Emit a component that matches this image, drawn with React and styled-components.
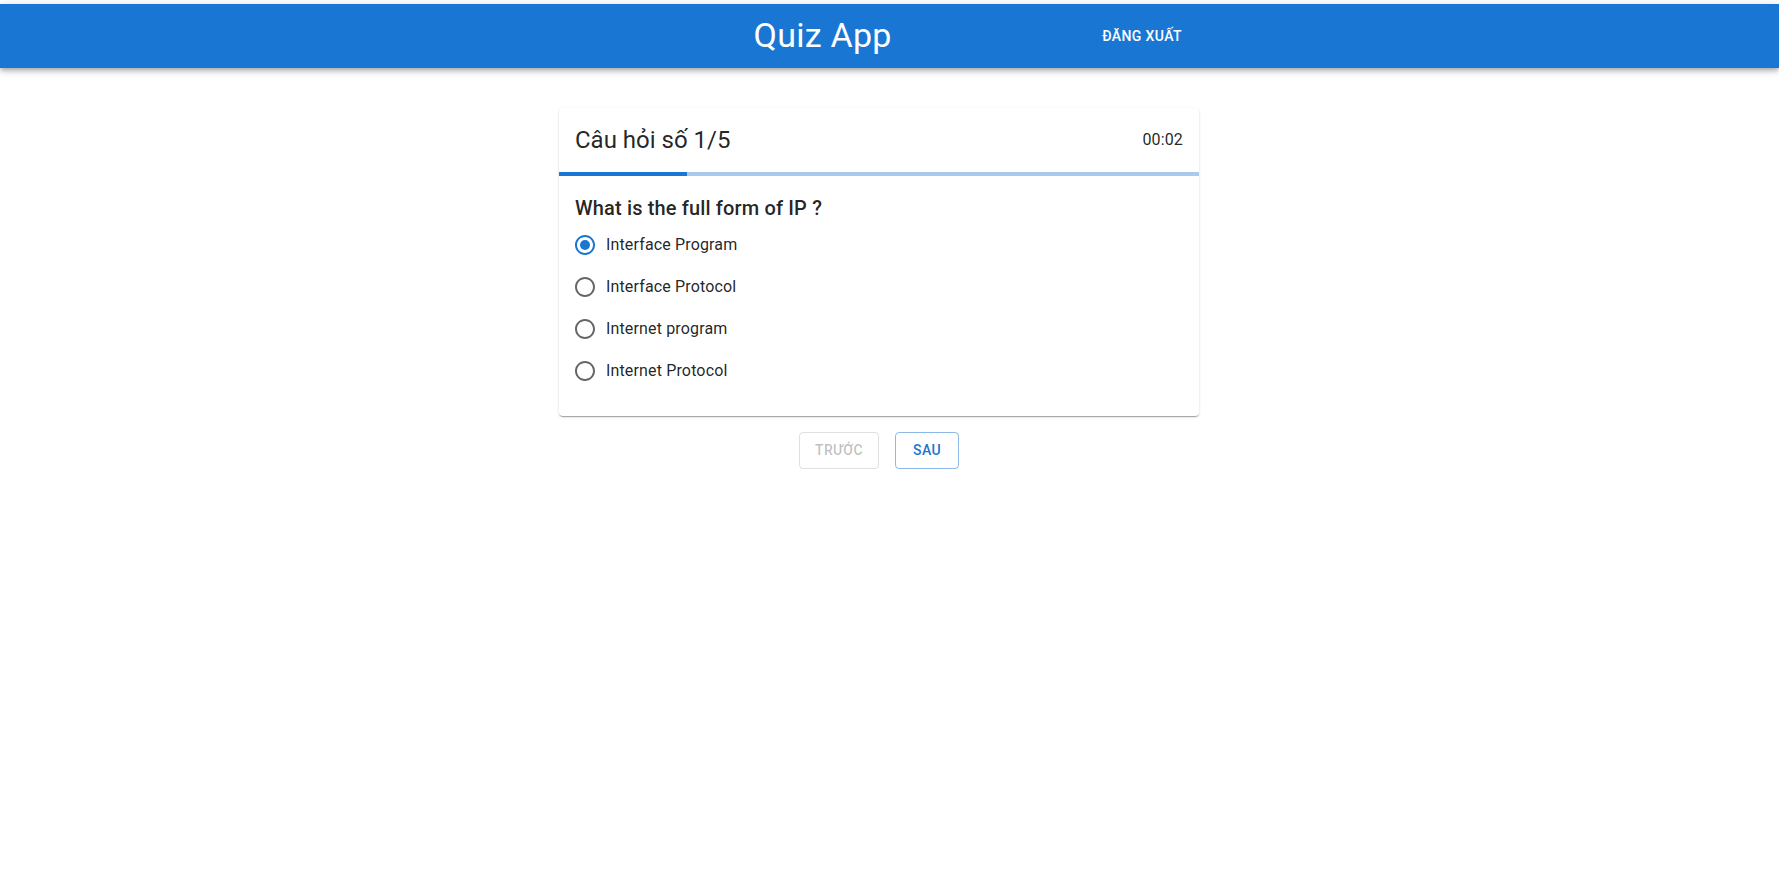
import React, { useState } from 'react'
import styled, { createGlobalStyle } from 'styled-components'

const GlobalStyle = createGlobalStyle`
  * { box-sizing: border-box; }
  body {
    margin: 0;
    background: #fff;
    font-family: Roboto, "Liberation Sans", Arial, sans-serif;
    color: rgba(0, 0, 0, 0.87);
  }
`

const answers = [
  'Interface Program',
  'Interface Protocol',
  'Internet program',
  'Internet Protocol',
]

const total = 5
const current = 1

export default function App() {
  const [picked, setPicked] = useState(0)

  return (
    <Page>
      <GlobalStyle />
      <AppBar>
        <Column>
          <Brand>Quiz App</Brand>
          <LogoutButton type="button">Đăng xuất</LogoutButton>
        </Column>
      </AppBar>
      <Main>
        <Column $stack>
          <Card>
            <CardHeader>
              <QuestionNo>
                Câu hỏi số {current}/{total}
              </QuestionNo>
              <Timer>00:02</Timer>
            </CardHeader>
            <Progress>
              <ProgressFill style={{ width: `${(current / total) * 100}%` }} />
            </Progress>
            <CardBody>
              <Question>What is the full form of IP ?</Question>
              <RadioGroup>
                {answers.map((a, i) => (
                  <Option key={a} onClick={() => setPicked(i)}>
                    <RadioBox>
                      <RadioIcon checked={picked === i} />
                    </RadioBox>
                    <OptionText>{a}</OptionText>
                  </Option>
                ))}
              </RadioGroup>
            </CardBody>
          </Card>
          <Nav>
            <NavButton type="button" disabled>
              Trước
            </NavButton>
            <NavButton type="button">Sau</NavButton>
          </Nav>
        </Column>
      </Main>
    </Page>
  )
}

const RadioIcon = ({ checked }) => (
  <Svg viewBox="0 0 24 24" $checked={checked}>
    <path d="M12 2C6.48 2 2 6.48 2 12s4.48 10 10 10 10-4.48 10-10S17.52 2 12 2zm0 18c-4.42 0-8-3.58-8-8s3.58-8 8-8 8 3.58 8 8-3.58 8-8 8z" />
    {checked && <circle cx="12" cy="12" r="5" />}
  </Svg>
)

const Page = styled.div`
  padding-top: 4px;
  min-height: 100vh;
`

const AppBar = styled.header`
  display: flex;
  justify-content: center;
  padding-right: 21px;
  height: 64px;
  background: #1976d2;
  color: #fff;
  box-shadow: 0px 2px 4px -1px rgba(0, 0, 0, 0.2),
    0px 4px 5px 0px rgba(0, 0, 0, 0.14), 0px 1px 10px 0px rgba(0, 0, 0, 0.12);
`

const Column = styled.div`
  width: 640px;
  display: flex;
  flex-direction: ${(p) => (p.$stack ? 'column' : 'row')};
  align-items: ${(p) => (p.$stack ? 'stretch' : 'center')};
`

const Brand = styled.h1`
  flex: 1;
  margin: 0;
  padding-right: 8px;
  text-align: center;
  font-size: 34px;
  font-weight: 400;
  line-height: 1.235;
  letter-spacing: 0.00735em;
`

const LogoutButton = styled.button`
  margin-right: 9px;
  padding: 6px 8px;
  min-width: 64px;
  border: 0;
  border-radius: 4px;
  background: transparent;
  color: #fff;
  font-family: inherit;
  font-size: 14px;
  font-weight: 500;
  line-height: 1.75;
  letter-spacing: 0.02857em;
  text-transform: uppercase;
  cursor: pointer;
  &:hover {
    background: rgba(255, 255, 255, 0.08);
  }
`

const Main = styled.main`
  display: flex;
  justify-content: center;
  padding: 40px 21px 0 0;
`

const Card = styled.section`
  background: #fff;
  border-radius: 4px;
  overflow: hidden;
  box-shadow: 0px 2px 1px -1px rgba(0, 0, 0, 0.2),
    0px 1px 1px 0px rgba(0, 0, 0, 0.14), 0px 1px 3px 0px rgba(0, 0, 0, 0.12);
`

const CardHeader = styled.div`
  display: flex;
  align-items: center;
  justify-content: space-between;
  padding: 16px;
`

const QuestionNo = styled.h2`
  margin: 0;
  font-size: 24px;
  font-weight: 400;
  line-height: 1.334;
`

const Timer = styled.span`
  font-size: 16px;
  line-height: 1.5;
  letter-spacing: 0.00938em;
`

const Progress = styled.div`
  height: 4px;
  background: rgb(167, 202, 237);
`

const ProgressFill = styled.div`
  height: 100%;
  background: #1976d2;
`

const CardBody = styled.div`
  padding: 16px 16px 24px;
`

const Question = styled.h3`
  margin: 0;
  font-size: 20px;
  font-weight: 500;
  line-height: 1.6;
  letter-spacing: 0.0075em;
`

const RadioGroup = styled.div`
  display: flex;
  flex-direction: column;
`

const Option = styled.label`
  display: flex;
  align-items: center;
  margin-left: -11px;
  cursor: pointer;
`

const RadioBox = styled.span`
  display: flex;
  padding: 9px;
  border-radius: 50%;
`

const Svg = styled.svg`
  width: 24px;
  height: 24px;
  fill: ${(p) => (p.$checked ? '#1976d2' : 'rgba(0, 0, 0, 0.6)')};
`

const OptionText = styled.span`
  font-size: 16px;
  line-height: 1.5;
  letter-spacing: 0.00938em;
`

const Nav = styled.div`
  display: flex;
  justify-content: center;
  gap: 16px;
  margin-top: 16px;
`

const NavButton = styled.button`
  min-width: 64px;
  padding: 5px 15px;
  border-radius: 4px;
  border: 1px solid rgba(25, 118, 210, 0.5);
  background: transparent;
  color: #1976d2;
  font-family: inherit;
  font-size: 14px;
  font-weight: 500;
  line-height: 1.75;
  letter-spacing: 0.02857em;
  text-transform: uppercase;
  cursor: pointer;
  &:disabled {
    border-color: rgba(0, 0, 0, 0.12);
    color: rgba(0, 0, 0, 0.26);
    cursor: default;
  }
`
